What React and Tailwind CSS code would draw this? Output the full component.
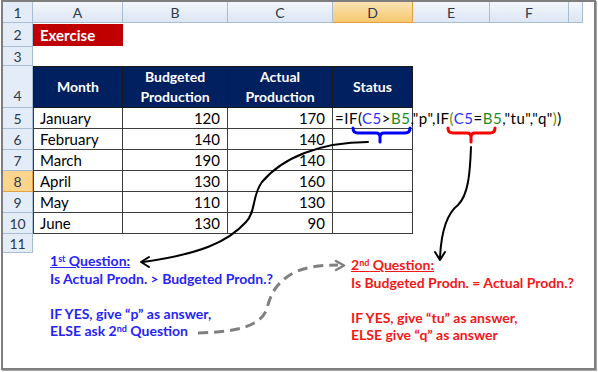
const cols = ['A', 'B', 'C', 'D', 'E', 'F', ''];

const data = [
  ['January', 120, 170],
  ['February', 140, 140],
  ['March', 190, 140],
  ['April', 130, 160],
  ['May', 110, 130],
  ['June', 130, 90],
];

function RowHead({ n, active = false, bottom = false }) {
  return (
    <div
      className={`flex justify-center border-b border-r text-[14px] text-[#2b3a4e] ${
        bottom ? 'items-end pb-[1px]' : 'items-center'
      } ${
        active
          ? 'bg-[#fbd58d] border-[#e2a13d]'
          : 'bg-[#e4ecf7] border-[#a9bdd4]'
      }`}
    >
      {n}
    </div>
  );
}

function ColHead({ label, active = false }) {
  return (
    <div
      className={`flex items-center justify-center border-b border-r text-[14px] text-[#2b3a4e] ${
        active
          ? 'bg-gradient-to-b from-[#fbe3b3] to-[#f6c86e] border-[#e2a13d]'
          : 'bg-gradient-to-b from-[#f3f6fb] to-[#dce6f3] border-[#a9bdd4]'
      }`}
    >
      {label}
    </div>
  );
}

function Formula() {
  return (
    <span className="whitespace-nowrap tracking-[0.5px]">
      =IF<span className="text-black">(</span>
      <span className="text-[#2f2fff]">C5</span>&gt;
      <span className="text-[#1e8a1e]">B5</span>,"p",IF
      <span className="text-[#6e8c00]">(</span>
      <span className="text-[#2f2fff]">C5</span>=
      <span className="text-[#1e8a1e]">B5</span>,"tu","q"
      <span className="text-[#6e8c00]">)</span>)
    </span>
  );
}

export default function App() {
  const cell = 'border-r border-b border-[#3c3c3c]';

  return (
    <div className="relative w-[598px] h-[372px] bg-white overflow-hidden font-['Lato',sans-serif]">
      <div className="ml-[1px] w-[595px] h-[370px] border-2 border-[#7f7f7f] shadow-[1px_1px_0_0_#a8a8a8]">
        <div className="grid grid-cols-[30px_90px_105px_105px_80px_77px_79px_14px] grid-rows-[21px_24px_19px_42px_21px_21px_21px_21px_21px_21px_19px]">
          {/* header row / row 1 */}
          <RowHead n={1} />
          {cols.map((c) => (
            <ColHead key={c || 'g'} label={c} active={c === 'D'} />
          ))}

          {/* row 2 */}
          <RowHead n={2} />
          <div className="bg-[#c00000] text-white font-bold text-[15px] flex items-center pl-[7px] my-[1px]">
            Exercise
          </div>
          <div className="col-span-6" />

          {/* row 3 */}
          <RowHead n={3} />
          <div className="col-span-7" />

          {/* row 4 - table header */}
          <RowHead n={4} bottom />
          {['Month', 'Budgeted\nProduction', 'Actual\nProduction', 'Status'].map((h, i) => (
            <div
              key={h}
              className={`bg-[#002060] text-white font-bold text-[14px] leading-[20px] whitespace-pre-line text-center flex items-center justify-center border-t border-b border-r border-[#1a1a1a] ${
                i === 0 ? 'border-l' : ''
              }`}
            >
              {h}
            </div>
          ))}
          <div className="col-span-3" />

          {/* rows 5-10 */}
          {data.map(([m, b, a], i) => (
            <div key={m} className="contents">
              <RowHead n={i + 5} active={i === 3} />
              <div className={`${cell} border-l flex items-center pl-[6px] text-[15px] text-black`}>{m}</div>
              <div className={`${cell} flex items-center justify-end pr-[7px] text-[15px] text-black`}>{b}</div>
              <div className={`${cell} flex items-center justify-end pr-[7px] text-[15px] text-black`}>{a}</div>
              <div className={`${cell} flex items-center pl-[2px] text-[15px] text-black overflow-visible`}>
                {i === 0 ? <Formula /> : null}
              </div>
              <div className="col-span-3" />
            </div>
          ))}

          {/* row 11 */}
          <RowHead n={11} />
          <div className="col-span-7" />
        </div>

        {/* annotations */}
        <div className="flex text-[14px] font-bold leading-[17.5px] whitespace-nowrap">
          <div className="ml-[47px] w-[301px] -mt-[1px] text-[#2525f5]">
            <div className="underline">
              1<sup className="text-[9px]">st</sup> Question:
            </div>
            <div>Is Actual Prodn. &gt; Budgeted Prodn.?</div>
            <div>&nbsp;</div>
            <div>IF YES, give “p” as answer,</div>
            <div>
              ELSE ask 2<sup className="text-[9px]">nd</sup> Question
            </div>
          </div>
          <div className="mt-[3px] text-[#f21818]">
            <div className="underline">
              2<sup className="text-[9px]">nd</sup> Question:
            </div>
            <div>Is Budgeted Prodn. = Actual Prodn.?</div>
            <div>&nbsp;</div>
            <div>IF YES, give “tu” as answer,</div>
            <div>ELSE give “q” as answer</div>
          </div>
        </div>
      </div>

      {/* drawn callouts */}
      <svg className="absolute left-0 top-0 pointer-events-none" width="598" height="372" fill="none">
        <path d="M353 128 Q353 133 358 133 L376 133 Q380 133 380 137 L380 142 M380 137 Q380 133 384 133 L405 133 Q410 133 410 128" stroke="#0000ff" strokeWidth="3" strokeLinecap="round" />
        <path d="M448 128 Q448 133 453 133 L467 133 Q471 133 471 137 L471 142 M471 137 Q471 133 475 133 L490 133 Q495 133 495 128" stroke="#ff0000" strokeWidth="3" strokeLinecap="round" />
        <path d="M368 142 C320 142 282 158 262 182 C252 195 256 212 246 222 C228 242 200 254 143 262" stroke="#000" strokeWidth="2" strokeLinecap="round" />
        <path d="M149 257 L141 262 L149 267" stroke="#000" strokeWidth="2" strokeLinecap="round" strokeLinejoin="round" />
        <path d="M471 147 C470 175 468 195 458 205 C445 215 441 235 440 258" stroke="#000" strokeWidth="2" strokeLinecap="round" />
        <path d="M435 252 L440 260 L445 252" stroke="#000" strokeWidth="2" strokeLinecap="round" strokeLinejoin="round" />
        <path d="M198 333 C240 332 262 325 267 308 C271 294 276 282 295 272 C310 266 325 265 338 265" stroke="#808080" strokeWidth="3" strokeDasharray="10 6" />
        <path d="M336 261 L344 265.5 L336 270" stroke="#808080" strokeWidth="2.5" strokeLinecap="round" strokeLinejoin="round" />
      </svg>
    </div>
  );
}
